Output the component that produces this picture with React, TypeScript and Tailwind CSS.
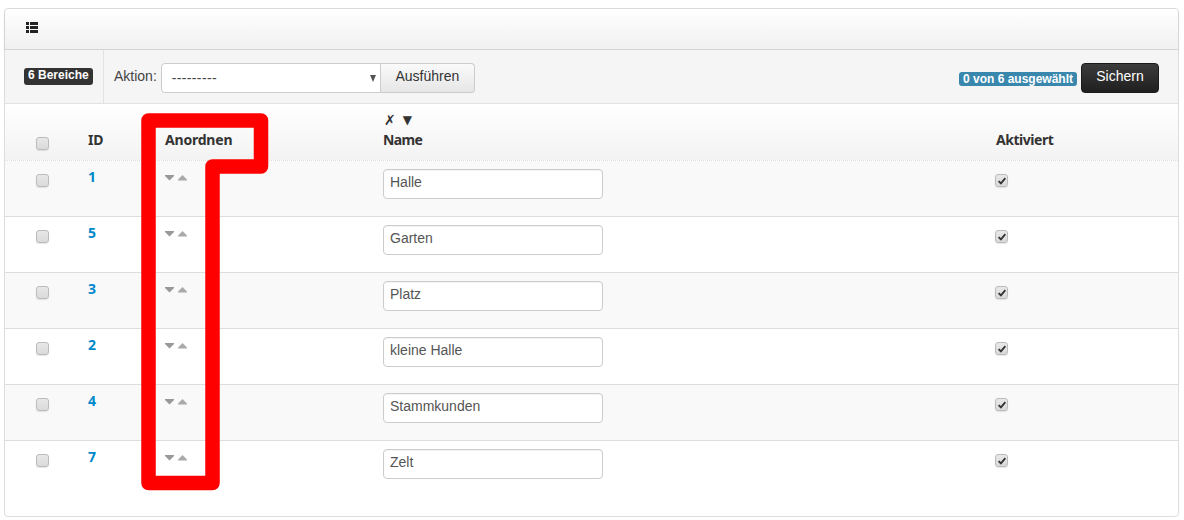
const rows = [
  { id: 1, name: "Halle" },
  { id: 5, name: "Garten" },
  { id: 3, name: "Platz" },
  { id: 2, name: "kleine Halle" },
  { id: 4, name: "Stammkunden" },
  { id: 7, name: "Zelt" },
];

const heading = "font-['Noto_Sans',sans-serif] font-bold text-[14px] leading-5 text-[#333]";

function Box({ checked = false }: { checked?: boolean }) {
  return (
    <span className="flex h-[13px] w-[13px] items-center justify-center rounded-[3px] border border-[#bbb] bg-gradient-to-b from-[#e8e8e8] to-[#dadada] shadow-[0_1px_1px_rgba(0,0,0,0.1)]">
      {checked && (
        <svg viewBox="0 0 11 11" className="h-[10px] w-[10px]">
          <path d="M1.8 5.6 L4.3 8.2 L9.2 2.4" fill="none" stroke="#333" strokeWidth="2" />
        </svg>
      )}
    </span>
  );
}

function Arrows() {
  return (
    <svg width="22" height="6" viewBox="0 0 22 6" className="block">
      <path d="M0 0 H9 V1 L4.5 5.5 L0 1 Z" fill="#999" />
      <path d="M17.5 0 L22 4.5 V5.5 H13 V4.5 Z" fill="#aaa" />
    </svg>
  );
}

export default function App() {
  return (
    <div className="relative h-[520px] w-[1184px] overflow-hidden bg-white pt-2 pl-1 font-['Liberation_Sans',sans-serif] text-[14px] text-[#333]">
      <div className="flex h-[509px] w-[1175px] flex-col rounded-[4px] border border-[#ddd] bg-white">
        <div className="flex h-[41px] items-center rounded-t-[4px] border-b border-[#d4d4d4] bg-gradient-to-b from-white to-[#f0f0f0] pb-[3px] pl-[21px] shadow-[0_1px_3px_rgba(0,0,0,0.1)]">
          <svg width="12" height="11" viewBox="0 0 12 11" className="block">
            <path
              d="M0 0H3V3H0ZM4 0H12V3H4ZM0 4H3V7H0ZM4 4H12V7H4ZM0 8H3V11H0ZM4 8H12V11H4Z"
              fill="#222"
            />
          </svg>
        </div>

        <div className="flex h-[54px] items-stretch border-b border-[#e2e2e2] bg-[#f5f5f5]">
          <div className="flex w-[99px] border-r border-[#e2e2e2] pt-[18px] pl-[19px]">
            <span className="h-[17px] rounded-[3px] bg-[#333] px-1 text-[12px] leading-[14px] font-bold whitespace-nowrap text-white">
              6 Bereiche
            </span>
          </div>
          <div className="flex items-start pt-[13px] pl-[10px]">
            <span className="mr-1 text-[14px] leading-[26px] text-[#444]">Aktion:</span>
            <div className="relative flex h-[30px] w-[220px] items-center rounded-l-[4px] border border-[#ccc] bg-white pt-[1px] pl-[10px] text-[14px] tracking-[0.35px] text-[#444]">
              ---------
              <span className="absolute top-[11px] right-[4px] h-0 w-0 border-x-[3.5px] border-t-[7px] border-x-transparent border-t-[#555]" />
            </div>
            <div className="flex h-[30px] w-[94px] items-center justify-center rounded-r-[4px] border border-l-0 border-[#ccc] bg-gradient-to-b from-[#fafafa] to-[#e6e6e6] pb-[4px] text-[14px] text-[#333]">
              Ausführen
            </div>
          </div>
          <div className="ml-auto flex items-start pt-[13px] pr-[19px]">
            <span className="mt-[9px] mr-1 h-[14px] rounded-[3px] bg-[#3a87ad] px-1 text-[12px] leading-[14px] font-bold whitespace-nowrap text-white">
              0 von 6 ausgewählt
            </span>
            <div className="flex h-[30px] w-[78px] items-center justify-center rounded-[4px] border border-[#1a1a1a] bg-gradient-to-b from-[#3c3c3c] to-[#1f1f1f] pb-[4px] text-[14px] text-white">
              Sichern
            </div>
          </div>
        </div>

        <div className="flex h-[57px] items-end border-b border-dotted border-[#ddd] bg-gradient-to-b from-white to-[#f3f3f3] pb-[10px]">
          <div className="flex w-[83px] justify-start pl-[31px]">
            <Box />
          </div>
          <div className={`w-[77px] tracking-[-0.3px] ${heading}`}>ID</div>
          <div className={`w-[218px] tracking-[-0.2px] ${heading}`}>Anordnen</div>
          <div className={`w-[613px] ${heading}`}>
            <div className="flex items-center gap-[7px] pl-[1px]">
              <span className="font-['DejaVu_Sans',sans-serif] text-[14px]">✗</span>
              <span className="font-['DejaVu_Sans',sans-serif] text-[12px]">▼</span>
            </div>
            <div className="tracking-[-0.6px]">Name</div>
          </div>
          <div className={`tracking-[-0.45px] ${heading}`}>Aktiviert</div>
        </div>

        {rows.map((r, i) => (
          <div
            key={r.id}
            className={`flex h-[56px] shrink-0 items-start pt-2 ${
              i < 5 ? "border-b border-[#ddd]" : ""
            } ${i % 2 === 0 && i < 5 ? "bg-[#f9f9f9]" : "bg-white"}`}
          >
            <div className="flex w-[83px] pt-[5px] pl-[31px]">
              <Box />
            </div>
            <div className="w-[77px] font-['Noto_Sans',sans-serif] text-[14px] leading-4 font-bold text-[#0088cc]">
              {r.id}
            </div>
            <div className="w-[218px] pt-[6px]">
              <Arrows />
            </div>
            <div className="w-[613px]">
              <div className="flex h-[30px] w-[220px] items-center rounded-[4px] border border-[#ccc] bg-white pb-[4px] pl-[6px] text-[14px] text-[#555] shadow-[inset_0_1px_1px_rgba(0,0,0,0.05)]">
                {r.name}
              </div>
            </div>
            <div className="-ml-[1px] pt-[5px]">
              <Box checked />
            </div>
          </div>
        ))}
      </div>

      <svg className="pointer-events-none absolute top-0 left-0" width="1184" height="520">
        <path
          d="M148.5 120.5 H261 V166.5 H212.5 V483 H148.5 Z"
          fill="none"
          stroke="#ff0000"
          strokeWidth="14.5"
          strokeLinejoin="round"
        />
      </svg>
    </div>
  );
}
